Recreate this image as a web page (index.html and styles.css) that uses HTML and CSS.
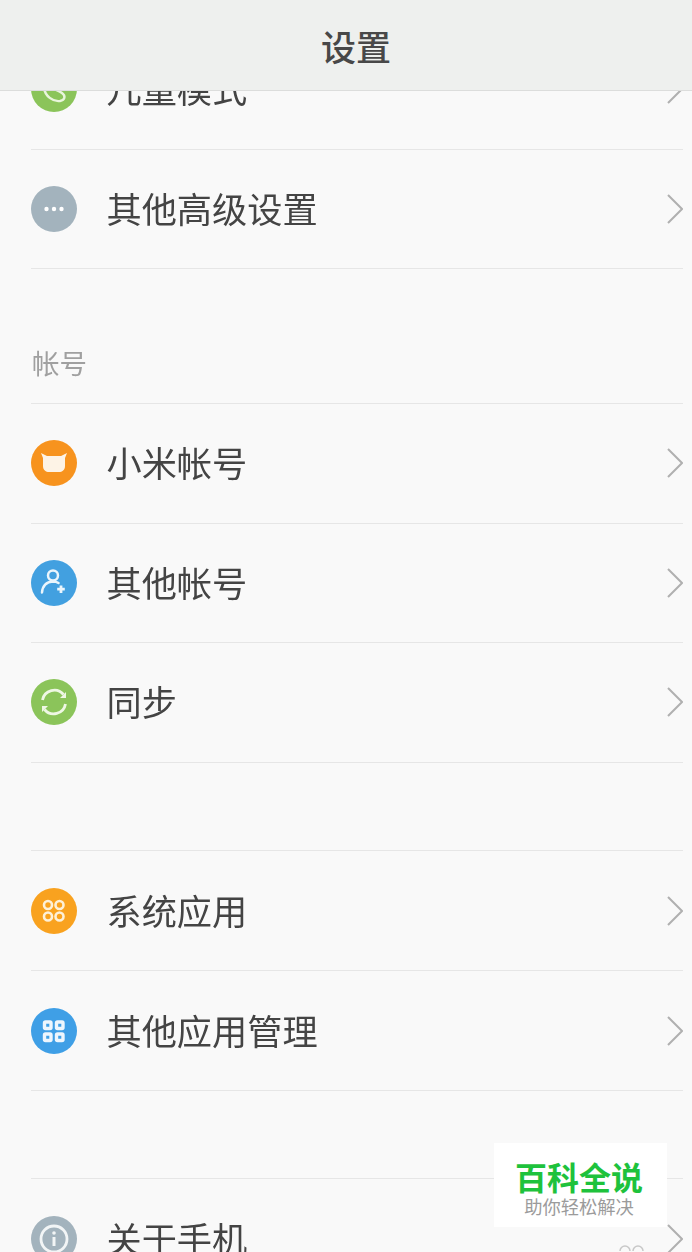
FILE: index.html
```html
<!DOCTYPE html>
<html>
<head>
    <meta charset="UTF-8">
    <title>设置</title>
    <link rel="stylesheet" href="styles.css">
</head>
<body>
<div class="page">
    <div class="header">设置</div>

    <div class="list">
        <div class="group">
            <div class="row">
                <svg class="icon" viewBox="0 0 46 46"><circle cx="23" cy="23" r="23" fill="#8bc45a"/><path d="M13 22C14 30 22 36 29 35C34 34 35 30 31 27C27 24 24 24 21 22" fill="none" stroke="#e9f5dc" stroke-width="2.4"/></svg>
                <span class="name">儿童模式</span>
                <svg class="arrow" viewBox="0 0 16 30"><path d="M1 1L15 15L1 29" /></svg>
            </div>
            <div class="row">
                <svg class="icon" viewBox="0 0 46 46"><circle cx="23" cy="23" r="23" fill="#a3b3bd"/><circle cx="15.500" cy="23" r="2.200" fill="#fff"/><circle cx="23" cy="23" r="2.200" fill="#fff"/><circle cx="30.500" cy="23" r="2.200" fill="#fff"/></svg>
                <span class="name">其他高级设置</span>
                <svg class="arrow" viewBox="0 0 16 30"><path d="M1 1L15 15L1 29" /></svg>
            </div>
        </div>

        <div class="label">帐号</div>
        <div class="group">
            <div class="row">
                <svg class="icon" viewBox="0 0 46 46"><circle cx="23" cy="23" r="23" fill="#f7931e"/><path d="M10 13L16 16H30L36 13L34 18V26C34 30 31 32 28 32H18C15 32 12 30 12 26V18Z" fill="#fdf3e6"/></svg>
                <span class="name">小米帐号</span>
                <svg class="arrow" viewBox="0 0 16 30"><path d="M1 1L15 15L1 29" /></svg>
            </div>
            <div class="row">
                <svg class="icon" viewBox="0 0 46 46"><circle cx="23" cy="23" r="23" fill="#42a0e0"/><circle cx="22" cy="15.500" r="5" fill="none" stroke="#eaf5fc" stroke-width="2.500"/><path d="M11 32.500C11.500 26 15 22 22 21.500C24 21.500 26 22 27.500 23" fill="none" stroke="#eaf5fc" stroke-width="2.500" stroke-linecap="round"/><path d="M30 25.500V33M26.200 29.200H33.800" fill="none" stroke="#eaf5fc" stroke-width="2.800"/></svg>
                <span class="name">其他帐号</span>
                <svg class="arrow" viewBox="0 0 16 30"><path d="M1 1L15 15L1 29" /></svg>
            </div>
            <div class="row">
                <svg class="icon" viewBox="0 0 46 46"><circle cx="23" cy="23" r="23" fill="#8bc45a"/><path d="M11.500 21A12 12 0 0 1 32.500 15.500M34.500 25A12 12 0 0 1 13.500 30.500" fill="none" stroke="#eef7e4" stroke-width="2.800"/><path d="M35 13V19H29M11 33V27H17" fill="#eef7e4"/></svg>
                <span class="name">同步</span>
                <svg class="arrow" viewBox="0 0 16 30"><path d="M1 1L15 15L1 29" /></svg>
            </div>
        </div>

        <div class="group spaced">
            <div class="row">
                <svg class="icon" viewBox="0 0 46 46"><circle cx="23" cy="23" r="23" fill="#f9a21f"/><g fill="none" stroke="#fdf0d8" stroke-width="2.600"><circle cx="17" cy="17" r="4"/><circle cx="28.500" cy="17" r="4"/><circle cx="17" cy="28.500" r="4"/><circle cx="28.500" cy="28.500" r="4"/></g></svg>
                <span class="name">系统应用</span>
                <svg class="arrow" viewBox="0 0 16 30"><path d="M1 1L15 15L1 29" /></svg>
            </div>
            <div class="row">
                <svg class="icon" viewBox="0 0 46 46"><circle cx="23" cy="23" r="23" fill="#3f9fe6"/><g fill="none" stroke="#eef6fd" stroke-width="3.400"><rect x="13.500" y="14" width="6.500" height="6.500" rx="1"/><rect x="25.500" y="14" width="6.500" height="6.500" rx="1"/><rect x="13.500" y="26" width="6.500" height="6.500" rx="1"/><rect x="25.500" y="26" width="6.500" height="6.500" rx="1"/></g></svg>
                <span class="name">其他应用管理</span>
                <svg class="arrow" viewBox="0 0 16 30"><path d="M1 1L15 15L1 29" /></svg>
            </div>
        </div>

        <div class="group spaced last">
            <div class="row">
                <svg class="icon" viewBox="0 0 46 46"><circle cx="23" cy="23" r="23" fill="#a3b3bd"/><circle cx="23" cy="23" r="13" fill="none" stroke="#f2f5f6" stroke-width="2.800"/><rect x="21.500" y="21" width="3" height="9" fill="#f2f5f6"/><circle cx="23" cy="17" r="1.800" fill="#f2f5f6"/></svg>
                <span class="name">关于手机</span>
                <svg class="arrow" viewBox="0 0 16 30"><path d="M1 1L15 15L1 29" /></svg>
            </div>
        </div>
    </div>

    <svg class="peek" viewBox="0 0 28 8"><path d="M2 7A5 5 0 0 1 12 7M15 7A5 5 0 0 1 25 7"/></svg>

    <div class="mark">
        <div class="mark-title">百科全说</div>
        <div class="mark-sub">助你轻松解决</div>
    </div>
</div>
</body>
</html>
```

FILE: styles.css
```css
*{
    margin: 0;
    padding: 0;
    box-sizing: border-box;
}
body{
    background: #f9f9f9;
    font-family: "Noto Sans CJK SC", "Liberation Sans", sans-serif;
}
.page{
    position: relative;
    height: 1252px;
    overflow: hidden;
    filter: blur(.5px);
}
.header{
    position: absolute;
    left: 0;
    top: 0;
    width: 100%;
    height: 91px;
    padding-left: 20px;
    background: #eef0ee;
    border-bottom: 1px solid #dcdddc;
    color: #484848;
    font-size: 35px;
    font-weight: 500;
    display: flex;
    align-items: center;
    justify-content: center;
}
.list{
    padding: 30px 9px 0 31px;
}
.row{
    height: 119.5px;
    display: flex;
    align-items: center;
    border-bottom: 1px solid #e6e6e6;
}
.spaced .row{
    height: 120px;
}
.icon{
    width: 46px;
    height: 46px;
    flex: none;
}
.name{
    margin-left: 29.500px;
    padding-bottom: 3px;
    flex: 1;
    font-size: 35.200px;
    color: #444;
}
.arrow{
    width: 16px;
    height: 30px;
    flex: none;
}
.arrow path{
    fill: none;
    stroke: #b0b0b0;
    stroke-width: 2;
}
.label{
    height: 135px;
    padding: 73px 0 0 1px;
    border-bottom: 1px solid #e6e6e6;
    color: #a0a0a0;
    font-size: 27.500px;
    line-height: 40px;
}
.spaced{
    margin-top: 87.500px;
    border-top: 1px solid #e6e6e6;
}
.last{
    margin-top: 87px;
}
.peek{
    position: absolute;
    left: 618px;
    top: 1244px;
    width: 28px;
    height: 8px;
}
.peek path{
    fill: none;
    stroke: #c8c8c8;
    stroke-width: 1.5;
}
.mark{
    position: absolute;
    left: 494px;
    top: 1143px;
    width: 173px;
    height: 84px;
    padding-right: 3px;
    background: #fff;
    text-align: center;
}
.mark-title{
    margin-top: 15px;
    color: #1ec23c;
    font-size: 32px;
    font-weight: 700;
    line-height: 36px;
}
.mark-sub{
    margin-top: 1px;
    color: #9b9b9b;
    font-size: 18.300px;
    line-height: 22px;
}
```
